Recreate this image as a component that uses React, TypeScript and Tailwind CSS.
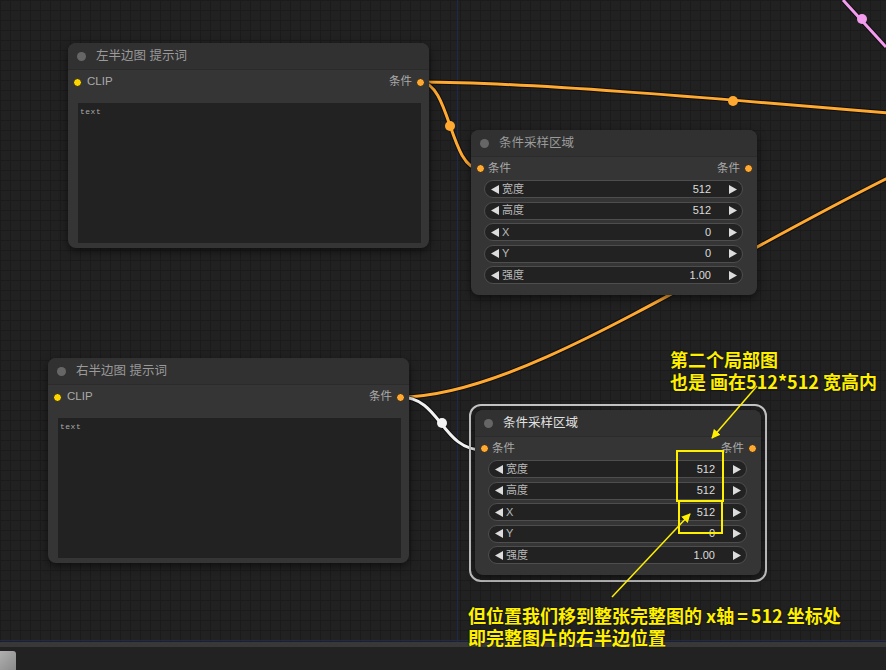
import type { ReactNode } from 'react';

const ORANGE = '#ffa931';

function Tri({ dir }: { dir: 'left' | 'right' }) {
  return (
    <svg width="8" height="9" viewBox="0 0 8 9" className="shrink-0">
      <path d={dir === 'left' ? 'M8 0 L0 4.5 L8 9 Z' : 'M0 0 L8 4.5 L0 9 Z'} fill="#dcdcdc" />
    </svg>
  );
}

function Widget({ label, value }: { label: string; value: string }) {
  return (
    <div className="flex h-[18px] items-center rounded-full border border-[#4e4e4e] bg-[#222] text-[11px] leading-none">
      <span className="ml-[6px]">
        <Tri dir="left" />
      </span>
      <span className="ml-[3px] text-[#b8b8b8]">{label}</span>
      <span className="ml-auto text-[#dcdcdc]">{value}</span>
      <span className="ml-[18px] mr-[5px]">
        <Tri dir="right" />
      </span>
    </div>
  );
}

function Dot({ color }: { color: string }) {
  return <span className={`block h-[9px] w-[9px] shrink-0 rounded-full border-[1.5px] border-[#222] ${color}`} />;
}

function NodeHeader({ title, selected }: { title: string; selected?: boolean }) {
  return (
    <div className="flex h-[27px] items-center rounded-t-[8px] border-b border-[#2b2b2b] bg-[#313131]">
      <span className="ml-[9px] block h-[9px] w-[9px] rounded-full bg-[#666]" />
      <span className={`ml-[10px] text-[12.5px] ${selected ? 'text-[#e0e0e0]' : 'text-[#9a9a9a]'}`}>{title}</span>
    </div>
  );
}

function PromptNode({ pos, title }: { pos: string; title: string }) {
  return (
    <div className={`absolute flex h-[205px] w-[361px] flex-col rounded-[8px] bg-[#353535] shadow-[0_3px_8px_rgba(0,0,0,0.55)] ${pos}`}>
      <NodeHeader title={title} />
      <div className="flex h-[24px] items-center text-[11.5px] text-[#aaa]">
        <span className="ml-[5px]">
          <Dot color="bg-[#ffd500]" />
        </span>
        <span className="ml-[5px]">CLIP</span>
        <span className="ml-auto">条件</span>
        <span className="ml-[4px] mr-[4px]">
          <Dot color="bg-[#ffa931]" />
        </span>
      </div>
      <div className="ml-[10px] mr-[8px] mt-[9px] h-[140px] bg-[#222] px-[2px] pt-[3px] font-['Liberation_Mono',monospace] text-[8px] tracking-[0.5px] text-[#aaa]">
        text
      </div>
    </div>
  );
}

function AreaNode({ pos, x, selected }: { pos: string; x: string; selected?: boolean }) {
  const rows: [string, string][] = [
    ['宽度', '512'],
    ['高度', '512'],
    ['X', x],
    ['Y', '0'],
    ['强度', '1.00'],
  ];
  return (
    <div className={`absolute flex h-[165px] w-[286px] flex-col rounded-[8px] bg-[#353535] shadow-[0_3px_8px_rgba(0,0,0,0.55)] ${pos}`}>
      <NodeHeader title="条件采样区域" selected={selected} />
      <div className="flex h-[23px] items-center text-[11.5px] text-[#aaa]">
        <span className="ml-[5px]">
          <Dot color="bg-[#ffa931]" />
        </span>
        <span className="ml-[3px]">条件</span>
        <span className="ml-auto">条件</span>
        <span className="ml-[4px] mr-[4px]">
          <Dot color="bg-[#ffa931]" />
        </span>
      </div>
      <div className="ml-[13px] mr-[14px] flex flex-col gap-[3.5px]">
        {rows.map(([l, v]) => (
          <Widget key={l} label={l} value={v} />
        ))}
      </div>
    </div>
  );
}

function Wire({ d, color }: { d: string; color: string }) {
  return (
    <g fill="none">
      <path d={d} stroke="#000" strokeOpacity={0.55} strokeWidth={5} />
      <path d={d} stroke={color} strokeWidth={3} />
    </g>
  );
}

function Wires() {
  return (
    <svg className="absolute inset-0" width="886" height="642">
      <Wire d="M420 82 C520 82 700 97 900 114" color={ORANGE} />
      <Wire d="M420 82 C450 82 450 169 480 169" color={ORANGE} />
      <Wire d="M400 397 C520 397 700 270 900 172" color={ORANGE} />
      <Wire d="M400 397 C441 397 441 450 483 450" color="#f2f2f2" />
      <Wire d="M843 0 L886 47" color="#f39bee" />
      <circle cx="733" cy="101" r="5" fill={ORANGE} />
      <circle cx="450" cy="126" r="5" fill={ORANGE} />
      <circle cx="442" cy="423" r="5" fill="#f4f4f4" />
      <circle cx="862" cy="19" r="5" fill="#f39bee" />
    </svg>
  );
}

function Note({ pos, children }: { pos: string; children: ReactNode }) {
  return (
    <div
      className={`absolute z-20 whitespace-nowrap font-['Noto_Sans_CJK_SC',sans-serif] text-[18px] font-bold leading-[22px] text-[#fff000] [text-shadow:0_0_2px_#000] ${pos}`}
    >
      {children}
    </div>
  );
}

export default function App() {
  return (
    <div className="relative h-[670px] w-[886px] overflow-hidden bg-[#222] font-['Liberation_Sans','Noto_Sans_CJK_SC',sans-serif]">
      {/* canvas */}
      <div className="relative h-[642px] bg-[#212121] bg-[linear-gradient(to_right,#1b1b1b_1px,transparent_1px),linear-gradient(to_bottom,#1b1b1b_1px,transparent_1px)] bg-[size:10px_10px]">
        <div className="absolute left-[457px] top-0 h-full w-px bg-[#1e2850]" />
        <div className="absolute bottom-[1px] left-0 h-px w-full bg-[#1e2850]" />
        <Wires />

        <PromptNode pos="left-[68px] top-[43px]" title="左半边图 提示词" />
        <AreaNode pos="left-[471px] top-[130px]" x="0" />
        <PromptNode pos="left-[48px] top-[358px]" title="右半边图 提示词" />

        <div className="absolute left-[469px] top-[404px] h-[178px] w-[298px] rounded-[12px] border-2 border-[#c4c4c4]" />
        <AreaNode pos="left-[475px] top-[410px]" x="512" selected />
      </div>

      {/* bottom bar */}
      <div className="h-[5px] bg-[#383838]" />
      <div className="relative h-[23px] bg-[#222]">
        <div className="absolute left-0 top-[4px] h-[19px] w-[16px] rounded-tr-[3px] bg-[linear-gradient(135deg,#b0b0b0,#8a8a8a)]" />
      </div>

      {/* annotations */}
      <div className="absolute left-[676px] top-[450px] z-20 h-[52px] w-[48px] border-2 border-[#fff000]" />
      <div className="absolute left-[678px] top-[500px] z-20 h-[34px] w-[45px] border-2 border-[#fff000]" />
      <svg className="absolute inset-0 z-20" width="886" height="670">
        <defs>
          <marker id="ah" viewBox="0 0 10 10" refX="9" refY="5" markerWidth="9" markerHeight="9" orient="auto" markerUnits="userSpaceOnUse">
            <path d="M0 0 L10 5 L0 10 Z" fill="#fff000" />
          </marker>
        </defs>
        <line x1="757" y1="386" x2="712" y2="438" stroke="#fff000" strokeWidth="1.5" markerEnd="url(#ah)" />
        <line x1="612" y1="597" x2="690" y2="514" stroke="#fff000" strokeWidth="1.5" markerEnd="url(#ah)" />
      </svg>
      <Note pos="left-[670px] top-[348px]">
        <div>第二个局部图</div>
        <div>也是 画在512*512 宽高内</div>
      </Note>
      <Note pos="left-[468px] top-[604px]">
        <div>
          但位置我们移到整张完整图的 x轴<span className="mx-[3px]">=</span>512 坐标处
        </div>
        <div>即完整图片的右半边位置</div>
      </Note>
    </div>
  );
}
